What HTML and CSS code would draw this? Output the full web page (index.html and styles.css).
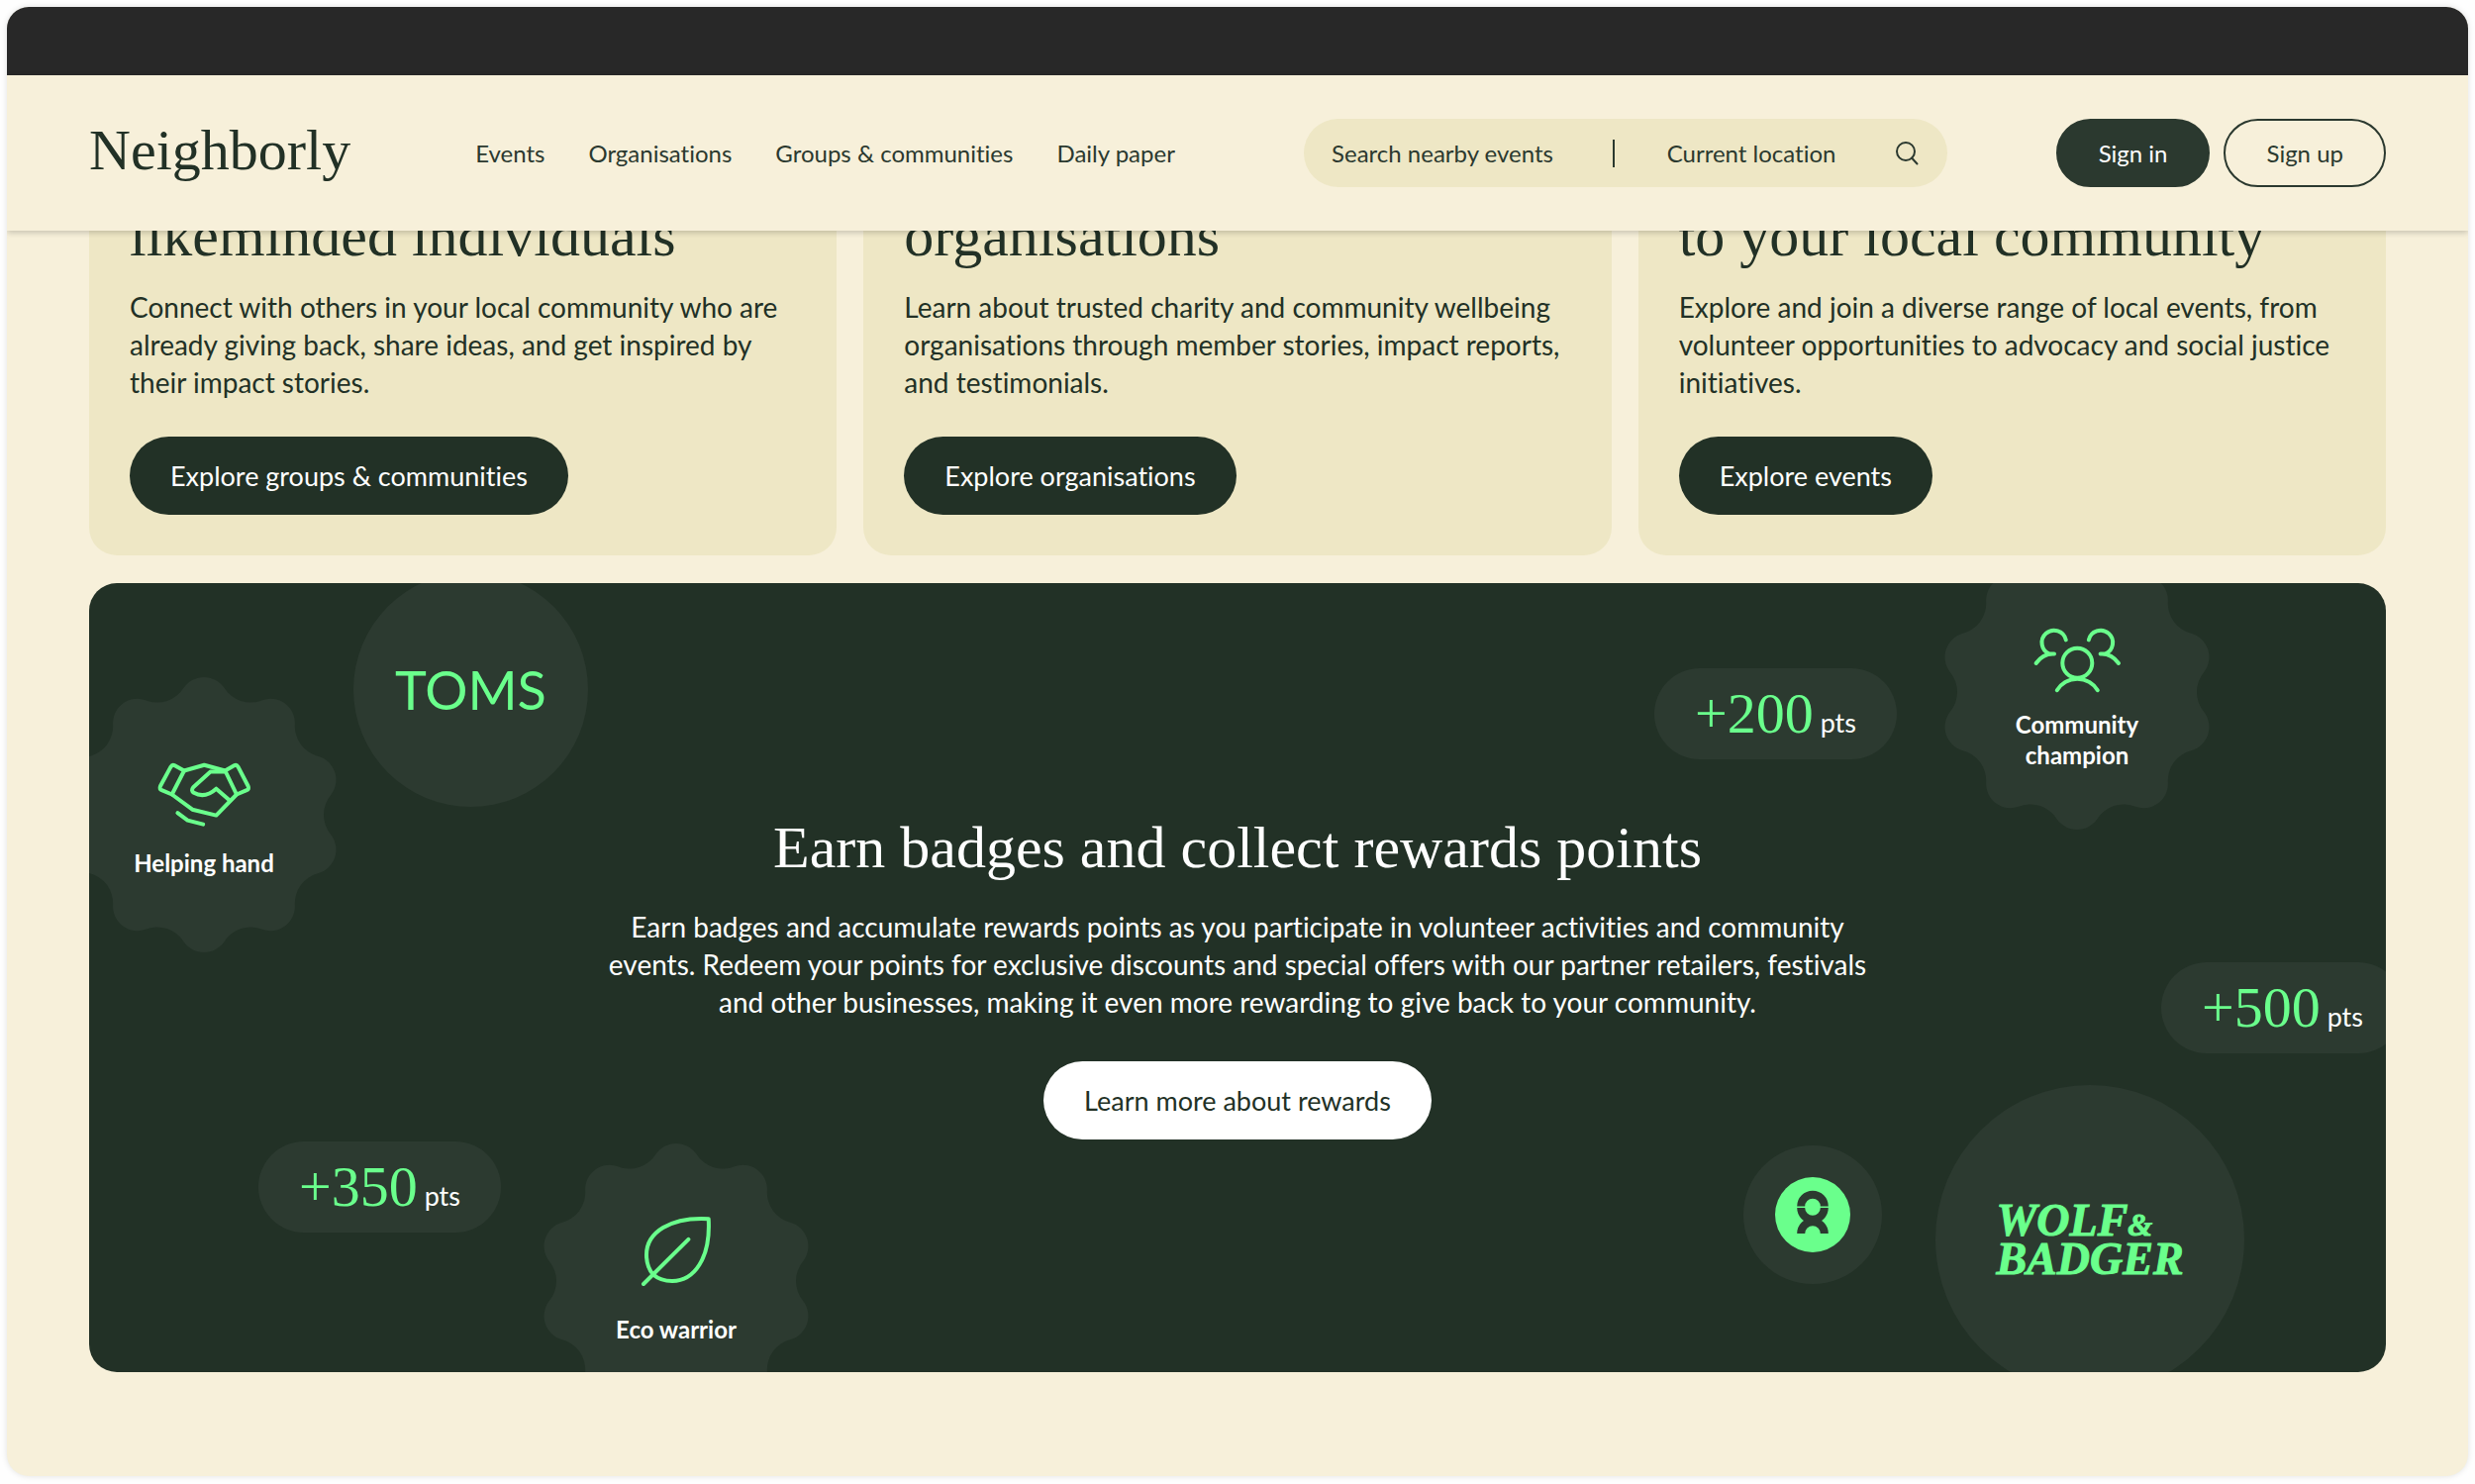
FILE: index.html
```html
<!DOCTYPE html>
<html lang="en">
<head>
  <meta charset="UTF-8">
  <meta name="viewport" content="width=device-width, initial-scale=1.0">
  <title>Neighborly</title>
  <link rel="stylesheet" href="styles.css">
</head>
<body>
  <!-- Shared badge outline -->
  <svg class="sprite" aria-hidden="true">
    <symbol id="badge-shape" viewBox="-140 -140 280 280">
      <path d="M-20.3 -128.4 A24.7 24.7 0 0 1 20.3 -128.4 A31.5 31.5 0 0 0 59 -115.8 A24.7 24.7 0 0 1 91.9 -91.9 A31.5 31.5 0 0 0 115.8 -59 A24.7 24.7 0 0 1 128.4 -20.3 A31.5 31.5 0 0 0 128.4 20.3 A24.7 24.7 0 0 1 115.8 59 A31.5 31.5 0 0 0 91.9 91.9 A24.7 24.7 0 0 1 59 115.8 A31.5 31.5 0 0 0 20.3 128.4 A24.7 24.7 0 0 1 -20.3 128.4 A31.5 31.5 0 0 0 -59 115.8 A24.7 24.7 0 0 1 -91.9 91.9 A31.5 31.5 0 0 0 -115.8 59 A24.7 24.7 0 0 1 -128.4 20.3 A31.5 31.5 0 0 0 -128.4 -20.3 A24.7 24.7 0 0 1 -115.8 -59 A31.5 31.5 0 0 0 -91.9 -91.9 A24.7 24.7 0 0 1 -59 -115.8 A31.5 31.5 0 0 0 -20.3 -128.4 Z"/>
    </symbol>
  </svg>

  <div class="window">
    <div class="title-bar"></div>

    <header class="site-header">
      <a class="logo" href="#">Neighborly</a>
      <nav class="main-nav">
        <a href="#">Events</a>
        <a href="#">Organisations</a>
        <a href="#">Groups &amp; communities</a>
        <a href="#">Daily paper</a>
      </nav>
      <form class="search">
        <input class="search-events" type="text" placeholder="Search nearby events" aria-label="Search nearby events">
        <span class="search-divider"></span>
        <input class="search-location" type="text" placeholder="Current location" aria-label="Current location">
        <button class="search-button" type="submit" aria-label="Search">
          <svg width="26" height="26" viewBox="0 0 26 26">
            <circle cx="12" cy="11" r="9"/>
            <path d="M18 17.5 L23.5 23.5"/>
          </svg>
        </button>
      </form>
      <div class="actions">
        <button class="sign-in" type="button">Sign in</button>
        <button class="sign-up" type="button">Sign up</button>
      </div>
    </header>

    <main>
      <section class="cards">
        <article class="card">
          <h2>likeminded individuals</h2>
          <p>Connect with others in your local community who are already giving back, share ideas, and get inspired by their impact stories.</p>
          <button class="button" type="button">Explore groups &amp; communities</button>
        </article>
        <article class="card">
          <h2>organisations</h2>
          <p>Learn about trusted charity and community wellbeing organisations through member stories, impact reports, and testimonials.</p>
          <button class="button" type="button">Explore organisations</button>
        </article>
        <article class="card">
          <h2>to your local community</h2>
          <p>Explore and join a diverse range of local events, from volunteer opportunities to advocacy and social justice initiatives.</p>
          <button class="button" type="button">Explore events</button>
        </article>
      </section>

      <section class="rewards">
        <div class="badge helping">
          <svg class="badge-bg"><use href="#badge-shape"/></svg>
          <svg class="badge-icon" viewBox="4 -1 104 96">
            <path d="M36 17.5 L26.5 12.3 Q24 11 22.6 13.4 L12 33 Q10.6 36 13.4 37.2 L23.7 41.5 Z"/>
            <path d="M77.4 17.5 L86.5 12.3 Q89 11 90.4 13.4 L100.6 33 Q102 36 99.2 37.2 L89 41.5 Z"/>
            <path d="M36 17.5 L56.3 11.8 L77.4 17.5"/>
            <path d="M77.4 18.6 H62.6 L45.2 34.2 Q42.5 37.5 45.8 39.8 Q57 46 68.4 35.7 L82 47.5"/>
            <path d="M23.7 41.5 L44.3 56.7 L68.4 62.6 L89 41.5"/>
            <path d="M29.4 60.2 L39.5 67.6 L55.2 71.6"/>
          </svg>
          <span>Helping hand</span>
        </div>

        <div class="circle toms"><span>TOMS</span></div>

        <div class="points points-200"><strong>+200</strong> pts</div>

        <div class="badge champion">
          <svg class="badge-bg"><use href="#badge-shape"/></svg>
          <svg class="badge-icon" viewBox="-2 -10 104 96">
            <circle cx="50.3" cy="39.8" r="15"/>
            <path d="M29.8 67.2 A24 24 0 0 1 70.8 67.2"/>
            <path d="M38.8 16.4 A12.3 12.3 0 1 0 22.5 30.6 H27 M25.5 30.6 Q15.5 30.6 8.6 40"/>
            <path d="M61.8 16.4 A12.3 12.3 0 1 1 78.1 30.6 H73.6 M75.1 30.6 Q85.1 30.6 92 40"/>
          </svg>
          <span>Community<br>champion</span>
        </div>

        <div class="points points-500"><strong>+500</strong> pts</div>

        <div class="points points-350"><strong>+350</strong> pts</div>

        <div class="badge eco">
          <svg class="badge-bg"><use href="#badge-shape"/></svg>
          <svg class="badge-icon" viewBox="0 10 104 96">
            <path d="M84.7 10.2 C46 8 22 24 22 46.5 C22 54 24 61 28.8 66.5 C34 71 41 73 48 73 C70 73 87 50 84.7 10.2 Z"/>
            <path d="M64.4 30.8 L19 76"/>
          </svg>
          <span>Eco warrior</span>
        </div>

        <div class="circle oxfam">
          <svg width="76" height="76" viewBox="-38 -38 76 76" role="img" aria-label="Oxfam">
            <circle class="disc" r="38"/>
            <path class="ring" d="M-11.8 -8.5 A11.8 11.8 0 0 1 11.8 -8.5"/>
            <path class="ring" d="M-11.8 -7 A11.8 11.8 0 0 0 11.8 -7"/>
            <path class="ring" d="M-11.8 19 A11.8 11.8 0 0 1 11.8 19"/>
          </svg>
        </div>

        <div class="circle wolf"><span>WOLF<small>&amp;</small><br>BADGER</span></div>

        <div class="rewards-text">
          <h2>Earn badges and collect rewards points</h2>
          <p>Earn badges and accumulate rewards points as you participate in volunteer activities and community events. Redeem your points for exclusive discounts and special offers with our partner retailers, festivals and other businesses, making it even more rewarding to give back to your community.</p>
          <button class="button light" type="button">Learn more about rewards</button>
        </div>
      </section>
    </main>
  </div>
</body>
</html>
```
FILE: styles.css
```css
* {
  box-sizing: border-box;
}

body {
  margin: 0;
  padding: 7px;
  background-color: #fefefe;
  color: #223126;
  font-family: Lato, "Liberation Sans", sans-serif;
  font-size: 27px;
  font-variant-ligatures: none;
  line-height: 38px;
}

h2,
p {
  margin: 0;
}

p {
  font-size: 28px;
}

h2 {
  font-family: "Liberation Serif", serif;
  font-size: 60px;
  font-weight: normal;
  line-height: 64px;
}

button,
input {
  font: inherit;
  font-variant-ligatures: none;
  color: inherit;
  border: none;
  padding: 0;
  background: none;
}

button {
  cursor: pointer;
}

.sprite {
  position: absolute;
  width: 0;
  height: 0;
}

.window {
  overflow: hidden;
  border-radius: 22px;
  background-color: #f7f0da;
  box-shadow: 0 0 6px rgba(0, 0, 0, 0.12);
}

.title-bar {
  height: 69px;
  background-color: #282828;
}

/* Header */
.site-header {
  position: relative;
  z-index: 1;
  display: flex;
  align-items: center;
  padding: 44px 83px;
  background-color: #f7f0da;
  box-shadow: 0 2px 6px rgba(0, 0, 0, 0.2);
  color: #2b392f;
  font-size: 24px;
  line-height: 32px;
}

.logo {
  margin-right: 126px;
  padding-bottom: 5px;
  color: #223126;
  font-family: "Liberation Serif", serif;
  font-size: 58px;
  line-height: 64px;
  text-decoration: none;
}

.main-nav {
  display: flex;
  gap: 44px;
}

.main-nav a {
  color: inherit;
  text-decoration: none;
}

.search {
  display: flex;
  align-items: center;
  width: 28%;
  height: 69px;
  margin: 0 110px 0 auto;
  padding: 0 28px;
  border-radius: 35px;
  background-color: #eee7c5;
}

.search input {
  min-width: 0;
  outline: none;
}

.search input::placeholder {
  color: inherit;
  opacity: 1;
}

.search-events {
  flex: 285;
}

.search-divider {
  width: 2px;
  height: 28px;
  margin-right: 53px;
  background-color: #2b392f;
}

.search-location {
  flex: 230;
}

.search-button {
  display: flex;
}

.search-button svg {
  fill: none;
  stroke: #2b392f;
  stroke-width: 2;
  stroke-linecap: round;
}

.actions {
  display: flex;
  gap: 14px;
}

.sign-in,
.sign-up {
  height: 69px;
  padding: 0 41px;
  border: 2px solid #2b392f;
  border-radius: 35px;
}

.sign-in {
  background-color: #2b392f;
  color: #fff;
}

/* Content */
main {
  padding: 0 83px 105px;
}

.cards {
  display: grid;
  grid-template-columns: repeat(3, 1fr);
  gap: 27px;
  margin-top: -68px; /* scrolled under the header */
}

.card {
  padding: 41px;
  border-radius: 28px;
  background-color: #eee7c5;
}

.card p {
  margin: 21px 0 36px;
}

.button {
  height: 79px;
  padding: 0 41px;
  border-radius: 40px;
  background-color: #223126;
  color: #fff;
}

.button.light {
  background-color: #fff;
  color: #223126;
}

/* Rewards */
.rewards {
  position: relative;
  overflow: hidden;
  margin-top: 28px;
  padding: 235px 41px;
  border-radius: 28px;
  background-color: #223126;
  color: #fff;
}

.rewards-text {
  position: relative;
  max-width: 1290px;
  margin: 0 auto;
  text-align: center;
}

.rewards-text p {
  margin: 29px 0 41px;
}

.badge,
.circle,
.points {
  position: absolute;
}

.badge {
  display: flex;
  flex-direction: column;
  align-items: center;
  justify-content: center;
  width: 280px;
  height: 280px;
  font-size: 24px;
  font-weight: bold;
  line-height: 31px;
  text-align: center;
}

.badge span {
  position: relative;
}

.badge-bg {
  position: absolute;
  inset: 0;
  width: 100%;
  height: 100%;
  fill: #2c3a30;
}

.badge-icon {
  position: relative;
  width: 104px;
  height: 96px;
  overflow: visible;
  fill: none;
  stroke: #6aff8c;
  stroke-width: 4;
  stroke-linecap: round;
  stroke-linejoin: round;
}

.circle {
  display: flex;
  align-items: center;
  justify-content: center;
  border-radius: 50%;
  background-color: #2c3a30;
  color: #6aff8c;
}

.points {
  padding: 14px 41px;
  border-radius: 46px;
  background-color: #2c3a30;
  white-space: nowrap;
}

.points strong {
  color: #6aff8c;
  font-family: "Liberation Serif", serif;
  font-size: 58px;
  font-weight: normal;
  line-height: 64px;
}

.helping {
  top: 94px;
  left: -24px;
}

.champion {
  top: -30px;
  right: 172px;
}

.eco {
  bottom: -48px;
  left: 453px;
}

.toms {
  top: -11px;
  left: 267px;
  width: 237px;
  height: 237px;
  font-size: 54px;
}

.oxfam {
  right: 509px;
  bottom: 89px;
  width: 140px;
  height: 140px;
}

.oxfam .disc {
  fill: #6aff8c;
}

.oxfam .ring {
  fill: none;
  stroke: #2c3a30;
  stroke-width: 8;
}

.wolf {
  right: 143px;
  bottom: -22px;
  width: 312px;
  height: 312px;
  font-family: "Liberation Serif", serif;
  font-size: 46px;
  font-style: italic;
  font-weight: bold;
  line-height: 38px;
  -webkit-text-stroke: 1px #6aff8c;
}

.wolf small {
  font-size: 32px;
  line-height: 1;
}

.points-200 {
  top: 86px;
  right: 494px;
}

.points-500 {
  top: 383px;
  right: -18px;
}

.points-350 {
  bottom: 141px;
  left: 171px;
}

@media (max-width: 1800px) {
  .site-header {
    flex-wrap: wrap;
    gap: 24px;
  }

  .search {
    width: 100%;
    margin: 0;
  }

  .cards {
    grid-template-columns: 1fr;
  }
}
```
